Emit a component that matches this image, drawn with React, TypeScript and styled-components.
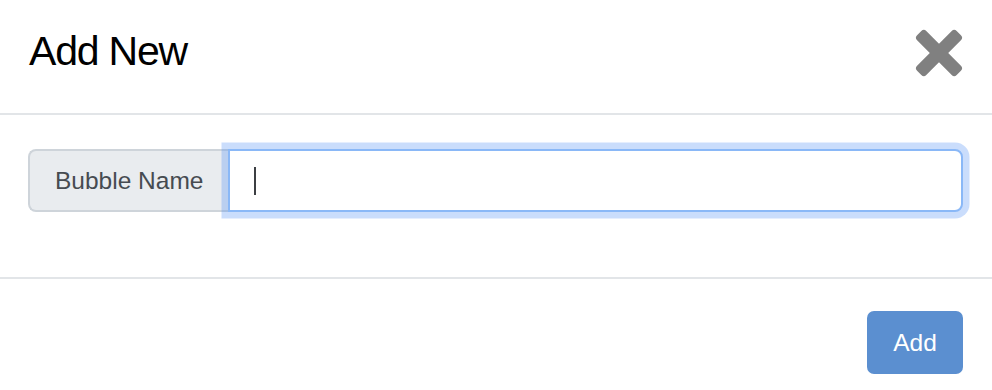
import styled, { createGlobalStyle } from "styled-components";

const GlobalStyle = createGlobalStyle`
  html, body {
    margin: 0;
    padding: 0;
    background: #fff;
  }
  body {
    font-family: "Liberation Sans", Arial, sans-serif;
    color: #212529;
  }
  * {
    box-sizing: border-box;
  }
`;

const Modal = styled.div`
  width: 992px;
  height: 390px;
  background: #fff;
  overflow: hidden;
`;

const Header = styled.header`
  display: flex;
  align-items: flex-start;
  justify-content: space-between;
  height: 115px;
  padding: 0 28px 0 28px;
  border-bottom: 2px solid #e2e5e8;
`;

const Title = styled.h5`
  margin: 27px 0 0 1px;
  font-size: 41px;
  line-height: 48px;
  font-weight: 400;
  letter-spacing: -1.2px;
  color: #000;
`;

const CloseButton = styled.button`
  display: flex;
  margin: 28px 0 0 0;
  padding: 0;
  border: 0;
  background: transparent;
  cursor: pointer;
`;

const Body = styled.section`
  padding: 34px 29px 65px 28px;
  border-bottom: 2px solid #e2e5e8;
`;

const InputGroup = styled.div`
  display: flex;
  align-items: stretch;
  height: 63px;
`;

const Addon = styled.span`
  display: flex;
  align-items: center;
  padding: 0 25px;
  font-size: 24.5px;
  color: #464b51;
  background: #e9ecef;
  border: 2px solid #ced4da;
  border-right: 0;
  border-radius: 8px 0 0 8px;
  white-space: nowrap;
`;

const Field = styled.div`
  position: relative;
  flex: 1;
  display: flex;
`;

const TextInput = styled.input<{ $focused?: boolean }>`
  flex: 1;
  min-width: 0;
  padding: 0 25px;
  font-family: inherit;
  font-size: 24.5px;
  color: #495057;
  background: #fff;
  border: 2px solid ${(p) => (p.$focused ? "#8ab8f7" : "#ced4da")};
  border-radius: 0 8px 8px 0;
  outline: none;
  box-shadow: ${(p) =>
    p.$focused ? "0 0 0 6.5px rgba(66, 133, 244, 0.28)" : "none"};
  caret-color: transparent;
`;

const Caret = styled.span`
  position: absolute;
  left: 26px;
  top: 18px;
  width: 2px;
  height: 28px;
  background: #3c3f43;
  pointer-events: none;
`;

const Footer = styled.footer`
  display: flex;
  justify-content: flex-end;
  padding: 32px 29px 0 28px;
`;

const PrimaryButton = styled.button`
  width: 96px;
  height: 63px;
  padding: 0;
  font-family: inherit;
  font-size: 24.5px;
  color: #fff;
  background: #5b8fd0;
  border: 0;
  border-radius: 7px;
  cursor: pointer;
`;

function CloseIcon() {
  return (
    <svg width="50" height="50" viewBox="0 0 50 50" aria-hidden="true">
      <g fill="#808080" transform="rotate(45 25 25)">
        <rect x="-3" y="18.5" width="56" height="13" rx="3.5" />
        <rect x="18.5" y="-3" width="13" height="56" rx="3.5" />
      </g>
    </svg>
  );
}

export default function App() {
  return (
    <>
      <GlobalStyle />
      <Modal>
        <Header>
          <Title>Add New</Title>
          <CloseButton aria-label="Close">
            <CloseIcon />
          </CloseButton>
        </Header>
        <Body>
          <InputGroup>
            <Addon>Bubble Name</Addon>
            <Field>
              <TextInput $focused type="text" defaultValue="" />
              <Caret />
            </Field>
          </InputGroup>
        </Body>
        <Footer>
          <PrimaryButton>Add</PrimaryButton>
        </Footer>
      </Modal>
    </>
  );
}
